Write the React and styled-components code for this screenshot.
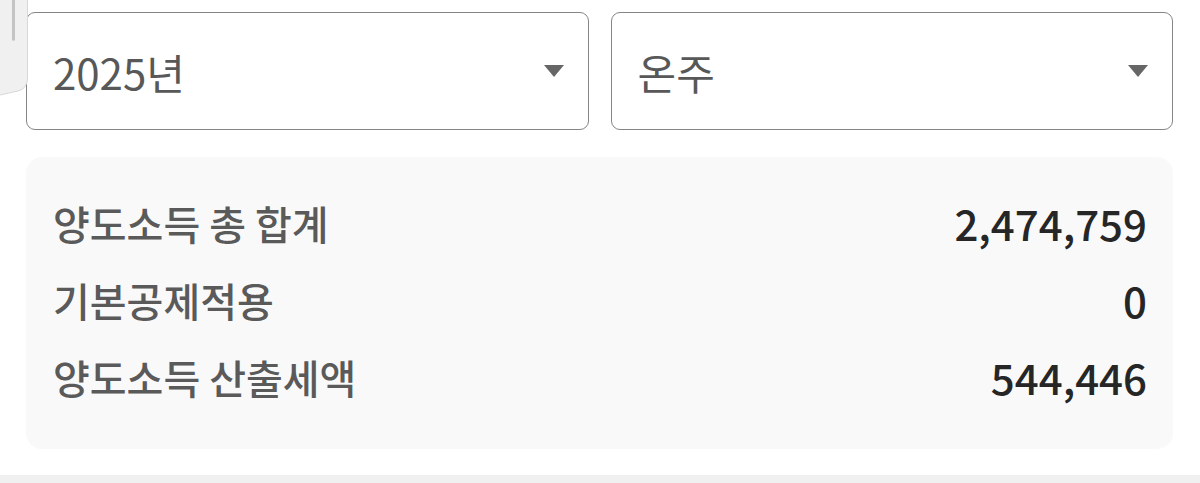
import React from 'react';
import styled, { createGlobalStyle } from 'styled-components';

const GlobalStyle = createGlobalStyle`
  html, body {
    margin: 0;
    padding: 0;
    background: #fff;
    font-family: "Noto Sans CJK KR", "Noto Sans", sans-serif;
  }
`;

const Page = styled.div`
  position: relative;
  width: 1200px;
  height: 483px;
  overflow: hidden;
  display: flex;
  flex-direction: column;
`;

const Content = styled.div`
  flex: 1;
  padding: 12px 27px 0 26px;
  display: flex;
  flex-direction: column;
  gap: 27px;
`;

const SelectRow = styled.div`
  display: grid;
  grid-template-columns: 1fr 1fr;
  gap: 22px;
`;

const Select = styled.div`
  height: 118px;
  box-sizing: border-box;
  border: 1.5px solid #858585;
  border-radius: 9px;
  background: #fff;
  display: flex;
  align-items: center;
  justify-content: space-between;
  padding: 0 24px 0 26px;
  font-size: 42px;
  color: #585858;
`;

const Caret = styled.span`
  width: 0;
  height: 0;
  border-left: 10px solid transparent;
  border-right: 10px solid transparent;
  border-top: 12px solid #666;
`;

const Summary = styled.div`
  background: #f9f9f9;
  border-radius: 16px;
  padding: 27px 26px 34px 27px;
  display: flex;
  flex-direction: column;
`;

const Row = styled.div`
  height: 77px;
  display: flex;
  align-items: center;
  justify-content: space-between;
`;

const Label = styled.span`
  font-size: 40px;
  font-weight: 500;
  color: #5a5a5a;
`;

const Value = styled.span`
  font-size: 42px;
  font-weight: 500;
  color: #262626;
`;

const BottomStrip = styled.div`
  height: 8px;
  background: #f0f0f0;
`;

const EdgeHandle = styled.div`
  position: absolute;
  left: -12px;
  top: -20px;
  width: 38px;
  height: 116px;
  background: #f0f0f0;
  border: 1px solid #d8d8d8;
  border-radius: 0 0 10px 0;
  transform: skewY(-12deg);
  transform-origin: top left;
  &::after {
    content: '';
    position: absolute;
    left: 23px;
    top: 0;
    width: 3px;
    height: 65px;
    background: #c4c4c4;
    transform: skewY(12deg);
  }
`;

const rows = [
  { label: '양도소득 총 합계', value: '2,474,759' },
  { label: '기본공제적용', value: '0' },
  { label: '양도소득 산출세액', value: '544,446' },
];

const App = () => (
  <Page>
    <GlobalStyle />
    <Content>
      <SelectRow>
        <Select>
          2025년
          <Caret />
        </Select>
        <Select>
          온주
          <Caret />
        </Select>
      </SelectRow>
      <Summary>
        {rows.map((r) => (
          <Row key={r.label}>
            <Label>{r.label}</Label>
            <Value>{r.value}</Value>
          </Row>
        ))}
      </Summary>
    </Content>
    <BottomStrip />
    <EdgeHandle />
  </Page>
);

export default App;
